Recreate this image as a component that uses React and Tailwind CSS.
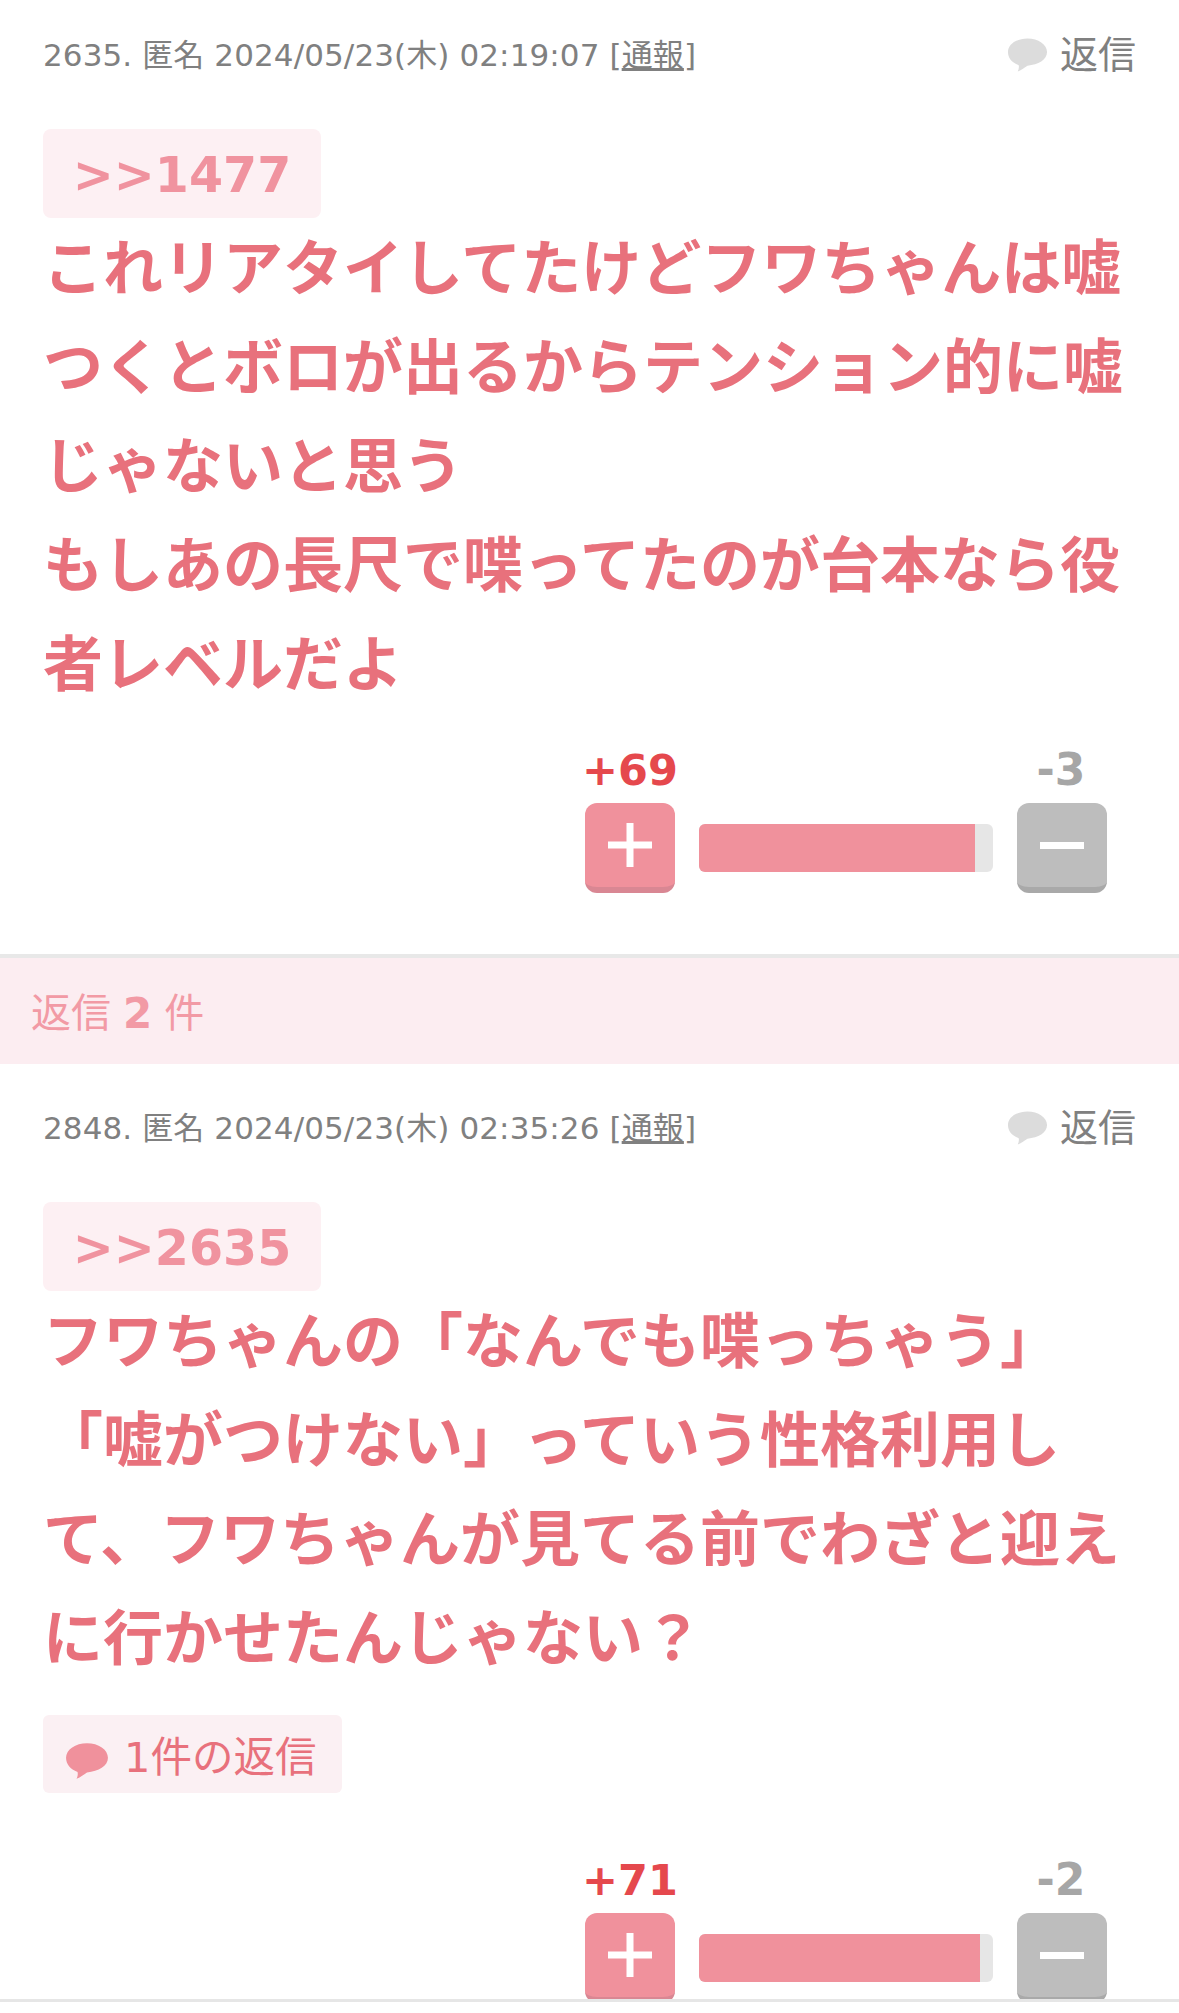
import React from 'react';

const FONT = 'font-["DejaVu_Sans","Noto_Sans_CJK_JP",sans-serif]';

const Bubble = ({ className }) => (
  <svg viewBox="0 0 42 36" className={className} fill="currentColor">
    <path d="M21 1C32 1 41 7 41 15C41 23 32 28 21 29C18 31 14 34 11 35C12 33 12.500 31 12 28.500C5 26 1 21 1 15C1 7 10 1 21 1Z" />
  </svg>
);

const Header = ({ no, date }) => (
  <div className="flex items-center justify-between h-[60px]">
    <div className="text-[31px] leading-[60px] text-[#808080] whitespace-nowrap tracking-[0.1px]">
      {no}. 匿名 {date} [<span className="underline underline-offset-2">通報</span>]
    </div>
    <div className="flex items-center gap-3 text-[#808080]">
      <Bubble className="w-[41px] h-[36px] text-[#dcdcdc]" />
      <span className="text-[38px] leading-[60px]">返信</span>
    </div>
  </div>
);

const Quote = ({ no }) => (
  <div className="mt-[44px] w-[278px] h-[89px] pt-[3px] rounded-lg bg-[#fdf0f3] flex items-center justify-center text-[49px] leading-none font-bold text-[#f0939f]">
    &gt;&gt;{no}
  </div>
);

const Votes = ({ up, down, percent, mt }) => (
  <div className={`flex justify-end pr-[72px] ${mt}`}>
    <div className="grid grid-cols-[90px_294px_90px] gap-x-6">
      <div className="-ml-[3px] text-[43px] leading-[48px] font-bold text-[#e5484d] whitespace-nowrap">+{up}</div>
      <div />
      <div className="pr-[2px] text-[44px] leading-[48px] font-bold text-[#a6a6a6] text-center">-{down}</div>
      <button className="mt-[9px] h-[90px] rounded-xl bg-[#f0919c] border-b-[6px] border-[#d98793] flex items-center justify-center">
        <svg width="44" height="44" viewBox="0 0 44 44" fill="#fff">
          <rect x="18.500" y="0" width="7" height="44" />
          <rect x="0" y="18.500" width="44" height="7" />
        </svg>
      </button>
      <div className="mt-[30px] h-[48px] rounded-md bg-[#e6e6e6] overflow-hidden">
        <div className="h-full bg-[#f0919c]" style={{ width: `${percent}%` }} />
      </div>
      <button className="mt-[9px] h-[90px] rounded-xl bg-[#bdbdbd] border-b-[6px] border-[#a9a9a9] flex items-center justify-center">
        <svg width="44" height="7" viewBox="0 0 44 7" fill="#fff">
          <rect x="0" y="0" width="44" height="7" />
        </svg>
      </button>
    </div>
  </div>
);

export default function App() {
  return (
    <div className={`relative h-[2013px] overflow-hidden bg-white ${FONT}`}>
      <section className="pt-[25px]">
        <div className="px-[43px]">
          <Header no="2635" date="2024/05/23(木) 02:19:07" />
          <Quote no="1477" />
          <p className="pt-[2px] -mb-[2px] text-[60px] leading-[99px] font-bold text-[#e8717c]">
            これリアタイしてたけどフワちゃんは嘘つくとボロが出るからテンション的に嘘じゃないと思う
            <br />
            もしあの長尺で喋ってたのが台本なら役者レベルだよ
          </p>
        </div>
        <Votes up="69" down="3" percent={94} mt="mt-[33px]" />
      </section>

      <div className="mt-[61px] h-[4px] bg-[#e8e8e8]" />
      <div className="h-[106px] bg-[#fcedf1] pl-[31px] pt-[4px] flex items-center text-[40px] text-[#f29aa5]">
        返信 <span className="mx-3 font-bold text-[42px]">2</span> 件
      </div>

      <section className="pt-[34px]">
        <div className="px-[43px]">
          <Header no="2848" date="2024/05/23(木) 02:35:26" />
          <Quote no="2635" />
          <p className="pt-[2px] -mb-[2px] text-[60px] leading-[99px] font-bold text-[#e8717c]">
            フワちゃんの「なんでも喋っちゃう」「嘘がつけない」っていう性格利用して、フワちゃんが見てる前でわざと迎えに行かせたんじゃない？
          </p>
          <div className="mt-[28px] w-[299px] h-[78px] rounded-md bg-[#fbf0f3] flex items-center pl-[22px] gap-[15px] text-[41.500px] text-[#e8717c]">
            <Bubble className="mt-[14px] w-[44px] h-[38px] text-[#f0919c]" />
            <span className="pt-[9px] whitespace-nowrap">1件の返信</span>
          </div>
        </div>
        <Votes up="71" down="2" percent={95.500} mt="mt-[63px]" />
      </section>

      <div className="absolute bottom-0 inset-x-0 h-[14px] bg-white border-t-[3px] border-[#e6e6e6]" />
    </div>
  );
}
